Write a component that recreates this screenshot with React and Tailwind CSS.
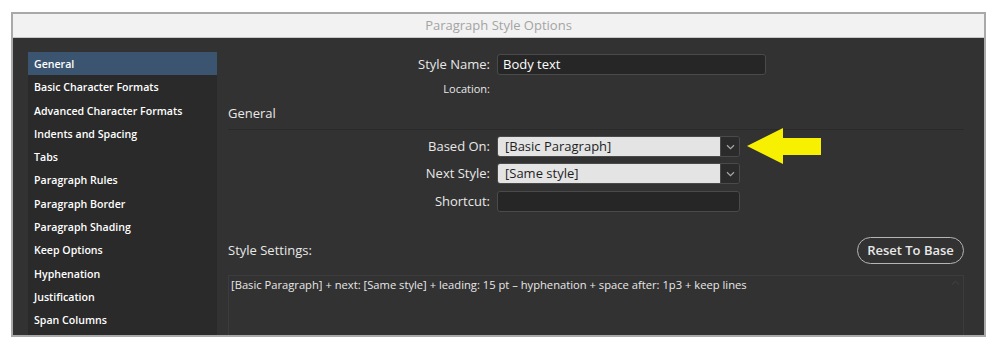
import React from 'react';

const sections = [
  'General',
  'Basic Character Formats',
  'Advanced Character Formats',
  'Indents and Spacing',
  'Tabs',
  'Paragraph Rules',
  'Paragraph Border',
  'Paragraph Shading',
  'Keep Options',
  'Hyphenation',
  'Justification',
  'Span Columns',
];

const Chevron = () => (
  <svg width="9" height="6" viewBox="0 0 9 6" fill="none" stroke="#a8a8a8" strokeWidth="1.2">
    <path d="M1 1.2 L4.5 4.6 L8 1.2" />
  </svg>
);

const Dropdown = ({ value }) => (
  <div className="flex h-[21px] w-[243px] rounded-[3px] border border-[#4a4a4a] overflow-hidden">
    <div className="flex-1 bg-[#e4e4e4] text-[#1e1e1e] text-[13px] leading-[19px] pl-[7px]">{value}</div>
    <div className="w-[19px] bg-[#2b2b2b] border-l border-[#4a4a4a] flex items-center justify-center">
      <Chevron />
    </div>
  </div>
);

const Row = ({ label, children, small }) => (
  <div className="flex items-center relative">
    <div className={`w-[269px] text-right pr-[7px] text-[#e8e8e8] ${small ? 'text-[11px]' : 'text-[13px]'}`}>{label}</div>
    {children}
  </div>
);

const App = () => {
  return (
    <div className="w-[1000px] h-[345px] bg-white pt-[12px] pl-[11px] overflow-hidden" style={{ fontFamily: '"Open Sans", "DejaVu Sans", sans-serif' }}>
      <div className="w-[975px] h-[325px] border-2 border-[#a9a9a9] flex flex-col">
        <div className="h-[24px] bg-[#f2f2f2] border-b border-[#c8c8c8] text-center text-[13px] leading-[23px] text-[#a4a4a4]">
          Paragraph Style Options
        </div>
        <div className="flex-1 bg-[#323232] flex pt-[14px] pl-[15px]">
          <div className="w-[189px] bg-[#2a2a2a] text-white text-[10.6px] font-semibold">
            {sections.map((s, i) => (
              <div
                key={s}
                className={`h-[23.3px] leading-[24px] pl-[6px] ${i === 0 ? 'bg-[#3b5470]' : ''}`}
              >
                {s}
              </div>
            ))}
          </div>
          <div className="flex-1 pl-[11px] pr-[20px] flex flex-col">
            <div className="pt-[2px]">
              <Row label="Style Name:">
                <div className="h-[21px] w-[269px] rounded-[3px] border border-[#4a4a4a] bg-[#262626] text-white text-[13px] leading-[19px] pl-[5px]">
                  Body text
                </div>
              </Row>
            </div>
            <div className="mt-[6px] h-[17px]">
              <Row label="Location:" small />
            </div>
            <div className="mt-[4px] text-[13px] text-[#e8e8e8] h-[22px] leading-[22px]">General</div>
            <div className="mt-[5px] border-t border-[#2a2a2a]" />
            <div className="mt-[6px] flex flex-col">
              <Row label="Based On:">
                <Dropdown value="[Basic Paragraph]" />
                <svg width="76" height="37" viewBox="0 0 76 37" className="absolute left-[519px] top-[-8px]">
                  <polygon points="0,18 36,0 36,10 74,10 74,27 36,27 36,36" fill="#f7f000" />
                </svg>
              </Row>
              <div className="mt-[6px]">
                <Row label="Next Style:">
                  <Dropdown value="[Same style]" />
                </Row>
              </div>
              <div className="mt-[7px]">
                <Row label="Shortcut:">
                  <div className="h-[21px] w-[243px] rounded-[3px] border border-[#4a4a4a] bg-[#262626]" />
                </Row>
              </div>
            </div>
            <div className="mt-[25px] flex items-center justify-between">
              <div className="text-[13px] text-[#e8e8e8]">Style Settings:</div>
              <button className="h-[27px] w-[107px] rounded-full border border-[#b5b5b5] text-[13px] font-semibold text-[#e8e8e8]">
                Reset To Base
              </button>
            </div>
            <div className="mt-[11px] flex-1 border border-[#3c3c3c] border-b-0 relative pl-[2px] pt-[1px] text-[11.2px] text-[#e8e8e8]">
              [Basic Paragraph] + next: [Same style] + leading: 15 pt – hyphenation + space after: 1p3 + keep lines
              <svg width="9" height="6" viewBox="0 0 9 6" fill="none" stroke="#444" strokeWidth="1" className="absolute right-[3px] top-[4px]">
                <path d="M1 4.6 L4.5 1.2 L8 4.6" />
              </svg>
            </div>
          </div>
        </div>
      </div>
    </div>
  );
};

export default App;
